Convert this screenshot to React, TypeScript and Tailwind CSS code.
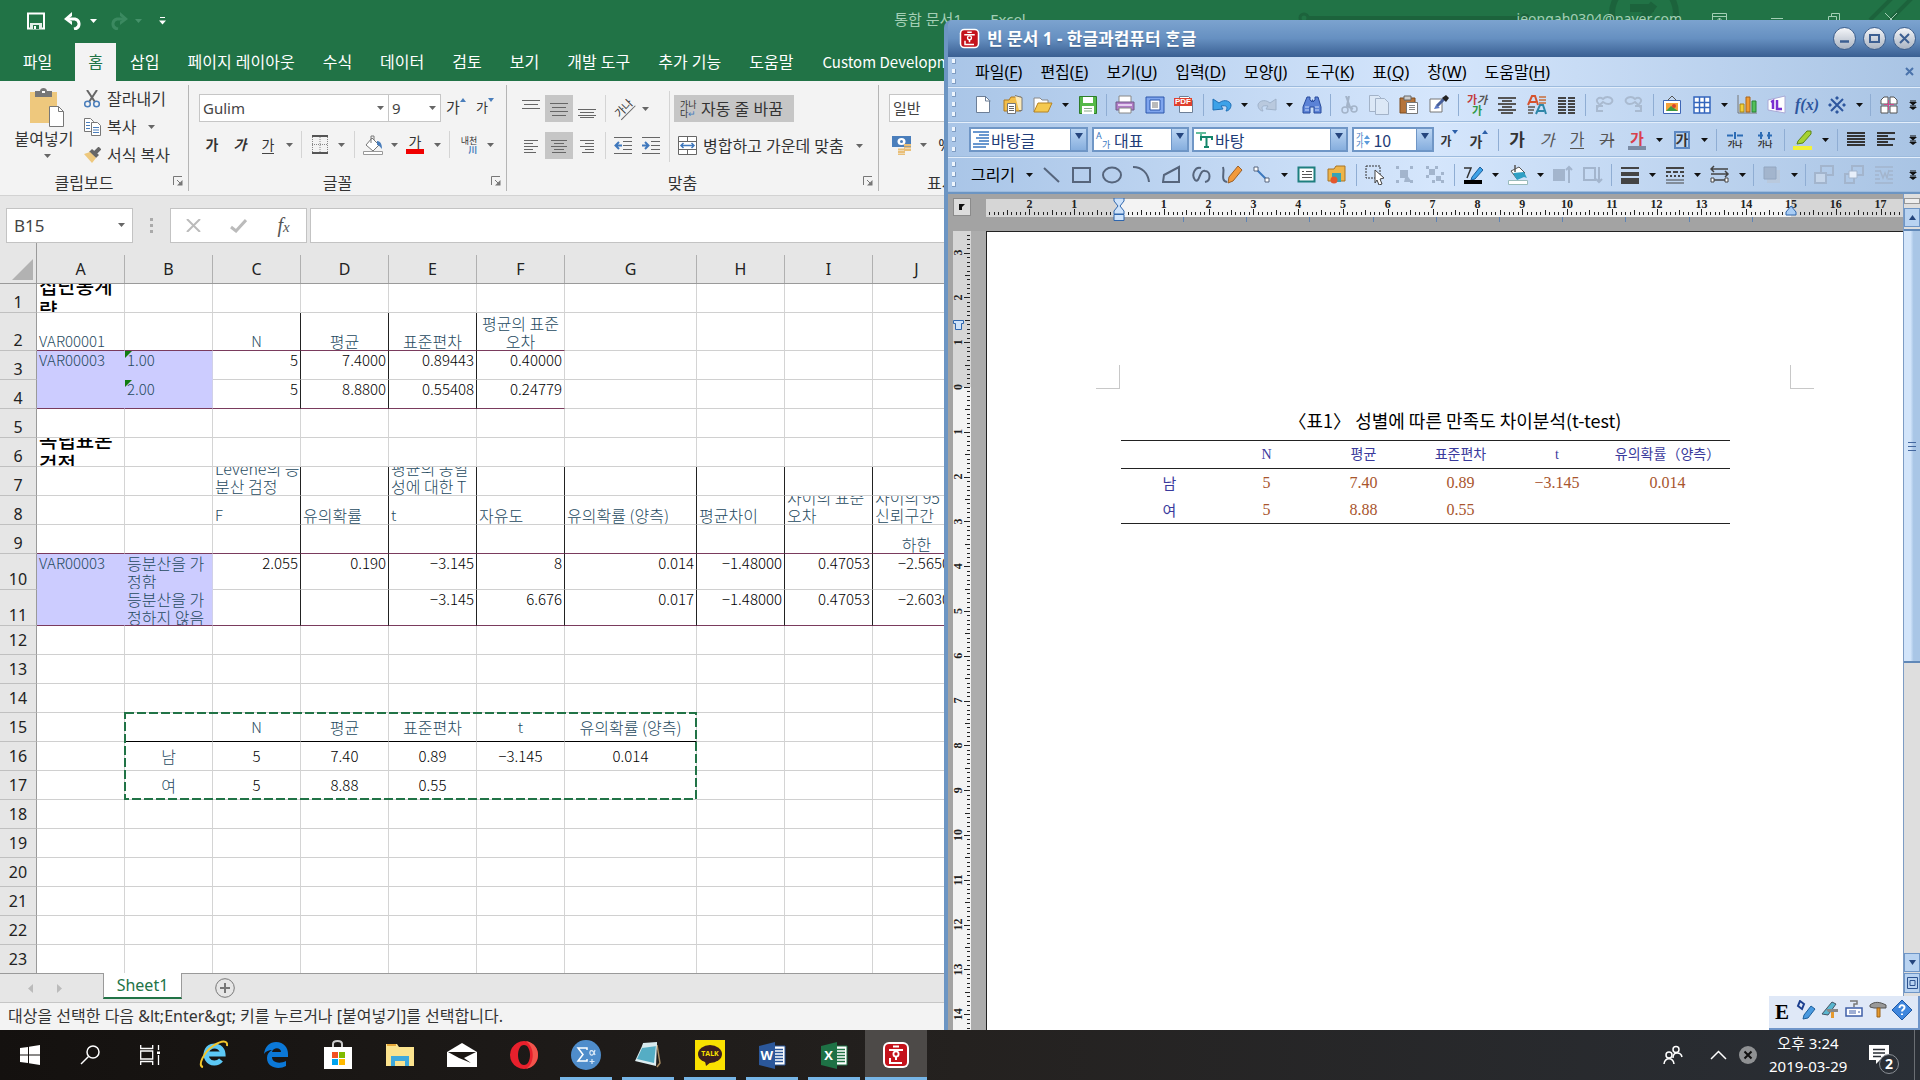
import React from "react";
import type { ReactNode } from "react";

/* ---------- shared bits ---------- */

const UI = "font-['Noto_Sans','Noto_Sans_CJK_KR',sans-serif]";

function Svg({ w = 20, h = w, children, className = "" }: { w?: number; h?: number; children: ReactNode; className?: string }) {
  return (
    <svg width={w} height={h} viewBox={`0 0 ${w} ${h}`} fill="none" className={`shrink-0 ${className}`} aria-hidden="true">
      {children}
    </svg>
  );
}

const Caret = ({ fill = "#666" }: { fill?: string }) => (
  <Svg w={7} h={4}>
    <path d="M0 0h7L3.5 4z" fill={fill} />
  </Svg>
);

const Tip = ({ up = false, fill = "#4a7ebb" }: { up?: boolean; fill?: string }) => (
  <Svg w={6} h={4} className="mb-4">
    <path d={up ? "M0 4h6L3 0z" : "M0 0h6L3 4z"} fill={fill} />
  </Svg>
);

const Lines = ({ rows, stroke = "#666", h = 18, sw = 1 }: { rows: number[][]; stroke?: string; h?: number; sw?: number }) => (
  <Svg w={20} h={h}>
    {rows.map(([x1, x2, y], i) => (
      <path key={i} d={`M${x1} ${y}H${x2}`} stroke={stroke} strokeWidth={sw} />
    ))}
  </Svg>
);

/* ---------- Excel ---------- */

function ExcelTitle() {
  return (
    <header className="relative flex h-[43px] shrink-0 items-start bg-[#217346] text-base text-[#a3cfb5]">
      <svg className="absolute inset-y-0 right-0" width="640" height="43" fill="none" stroke="#1c633c" aria-hidden="true">
        <circle cx="24" cy="18" r="4" strokeWidth="3" />
        <path d="M29 18H240" strokeWidth="4" />
        <circle cx="245" cy="18" r="4" fill="#1c633c" />
        <circle cx="364" cy="14" r="32" strokeWidth="6" />
        <path d="M350 8h24M374 4l-14 18" strokeWidth="8" />
        <path d="M590 20l24-24M606 24l28-28" strokeWidth="4" />
      </svg>
      <div className="relative flex h-[42px] min-w-0 flex-1 items-center">
        <button aria-label="저장" className="ml-[27px] w-[37px]">
          <Svg w={18} h={18}>
            <path d="M1 1.500h16v15h-16z" stroke="#fff" strokeWidth="2" />
            <path d="M3 11h12v6H3z" fill="#e3efe8" />
            <path d="M6 13h6v4H6z" fill="#217346" />
            <path d="M7 14h2v3H7z" fill="#fff" />
          </Svg>
        </button>
        <button aria-label="실행 취소" className="flex w-[45px] items-center gap-[7px]">
          <Svg w={19} h={18}>
            <path d="M3 7h8a5 5 0 0 1 1 9.500l-2 .5" stroke="#fff" strokeWidth="3" />
            <path d="M8 0L0 7l8 6V9.500L4 7l4-3z" fill="#fff" />
          </Svg>
          <Caret fill="#fff" />
        </button>
        <button aria-label="다시 실행" className="flex w-[50px] items-center gap-[7px]">
          <Svg w={19} h={18}>
            <path d="M16 7H8a5 5 0 0 0-1 9.500l2 .5" stroke="#3b8960" strokeWidth="3" />
            <path d="M11 0l8 7-8 6V9.500L15 7l-4-3z" fill="#3b8960" />
          </Svg>
          <Caret fill="#45916a" />
        </button>
        <button aria-label="빠른 실행 도구 모음 사용자 지정">
          <Svg w={7} h={8}>
            <path d="M1 .5h5" stroke="#fff" />
            <path d="M0 3.500h7L3.500 7.500z" fill="#fff" />
          </Svg>
        </button>
      </div>
      <h1 className="relative pt-[9px] text-[15px] leading-5 whitespace-pre">통합 문서1{"   -   "}Excel</h1>
      <div className="relative flex min-w-0 flex-1 items-start justify-end">
        <span className="mr-[22px] pt-[9px] text-[14px] leading-5">jeongah0304@naver.com</span>
        <button aria-label="리본 메뉴 표시 옵션" className="w-[57px] pt-[13px] pl-[8px]">
          <Svg w={15} h={12}>
            <path d="M.5.500h14v11H.5zM.5 3.500h14M7.500 11V5M5 7.500L7.500 5 10 7.500" stroke="#a3cfb5" />
          </Svg>
        </button>
        <button aria-label="최소화" className="w-[57px] pt-[18px] pl-[10px]">
          <Svg w={12} h={2}><path d="M0 .5h12" stroke="#a3cfb5" /></Svg>
        </button>
        <button aria-label="이전 크기로 복원" className="w-[57px] pt-[13px] pl-[10px]">
          <Svg w={12} h={12}><path d="M.5 3.500h8v8h-8zM3.500 3V.5h8v8H9" stroke="#a3cfb5" /></Svg>
        </button>
        <button aria-label="닫기" className="w-[45px] pt-[13px] pl-[10px]">
          <Svg w={12} h={12}><path d="M0 0l12 12M12 0L0 12" stroke="#a3cfb5" /></Svg>
        </button>
      </div>
    </header>
  );
}

const TABS = ["삽입", "페이지 레이아웃", "수식", "데이터", "검토", "보기", "개발 도구", "추가 기능", "도움말"];

function ExcelTabs() {
  return (
    <nav className="flex h-[38px] shrink-0 bg-[#217346] text-base text-white">
      <button className="w-[75px]">파일</button>
      <button className="w-[41px] bg-[#f3f3f3] text-[#217346]">홈</button>
      {TABS.map((t) => (
        <button key={t} className="px-[14px] whitespace-nowrap">{t}</button>
      ))}
      <button className="pl-[15px] font-['Noto_Sans_CJK_KR',sans-serif] text-[15px] whitespace-nowrap">Custom Development</button>
    </nav>
  );
}

const Launcher = () => (
  <button aria-label="추가 옵션" className="absolute right-[5px] bottom-[5px]">
    <Svg w={10} h={10}>
      <path d="M.5 9V.500H9M4 4l4 4" stroke="#777" />
      <path d="M9.500 4v5.500H4z" fill="#777" />
    </Svg>
  </button>
);

function Group({ label, className, children, launcher = true }: { label: string; className: string; children: ReactNode; launcher?: boolean }) {
  return (
    <section aria-label={label} className={`relative my-1 flex h-[106px] shrink-0 flex-col border-r border-[#b5b5b5] ${className}`}>
      {children}
      <div className="mt-auto mb-[-2px] pr-5 text-center text-base leading-5 text-[#333]">{label}</div>
      {launcher && <Launcher />}
    </section>
  );
}

const RBtn = ({ label, w = "w-7", on = false, children }: { label: string; w?: string; on?: boolean; children: ReactNode }) => (
  <button aria-label={label} className={`flex h-[27px] shrink-0 items-center justify-center ${w} ${on ? "bg-[#c6c6c6]" : ""}`}>
    {children}
  </button>
);
const RSep = ({ w = "w-2" }: { w?: string }) => (
  <span className={`flex h-[27px] shrink-0 justify-center ${w}`}>
    <span className="w-px bg-[#d4d4d4]" />
  </span>
);

function Combo({ label, value, className }: { label: string; value: string; className: string }) {
  return (
    <div className={`relative h-7 border border-[#c6c6c6] bg-white ${className}`}>
      <select aria-label={label} className="h-full w-full appearance-none bg-transparent pl-[3px] text-[15px] text-[#444] outline-none">
        <option>{value}</option>
      </select>
      <span className="pointer-events-none absolute top-[11px] right-[4px]"><Caret /></span>
    </div>
  );
}

function Ribbon() {
  return (
    <div className="flex h-[115px] shrink-0 border-b border-[#d2d2d2] bg-[#f3f3f3] text-base text-[#333]">
      <Group label="클립보드" className="w-[189px]">
        <div className="flex">
          <button className="flex w-[84px] flex-col items-center pt-[3px] pl-[4px] leading-[22px]">
            <Svg w={34} h={39} className="ml-[6px]">
              <path d="M0 4h27v31H0z" fill="#eec87d" />
              <path d="M5 3h5c0-4 7-4 7 0h5v6H5z" fill="#777" />
              <path d="M12 3h3v2h-3z" fill="#fff" />
              <path d="M19.500 18.500h9l5 5v15h-14z" fill="#fff" stroke="#777" />
              <path d="M28.500 18.500v5h5" stroke="#777" />
            </Svg>
            <span className="mt-[1px]">붙여넣기</span>
            <span className="mt-[4px] ml-[6px]"><Caret /></span>
          </button>
          <div className="flex flex-col">
            <button className="flex h-7 items-center gap-[7px]">
              <Svg w={16} h={18}>
                <path d="M3 0l8 12M13 0L5 12" stroke="#666" strokeWidth="2" />
                <circle cx="3.500" cy="14" r="2.800" stroke="#4a7ebb" strokeWidth="1.500" />
                <circle cx="12.500" cy="14" r="2.800" stroke="#4a7ebb" strokeWidth="1.500" />
              </Svg>
              잘라내기
            </button>
            <button className="flex h-7 items-center gap-[6px]">
              <Svg w={17} h={18}>
                <path d="M.5.500h6l3 3v10h-9z" fill="#fff" stroke="#777" />
                <path d="M7.500 4.500h6l3 3v10h-9z" fill="#fff" stroke="#777" />
                <path d="M2 4.500h4M2 7.500h4M2 10.500h4M9 9.500h6M9 12h6M9 14.500h6" stroke="#4a7ebb" />
              </Svg>
              복사 <span className="ml-[6px]"><Caret /></span>
            </button>
            <button className="flex h-7 items-center gap-[6px]">
              <Svg w={17} h={16}>
                <path d="M16 1l-5 5" stroke="#666" strokeWidth="4" />
                <path d="M8 2l7 6-3 3-7-6z" fill="#666" />
                <path d="M0 7l6-2 6 6-4 5z" fill="#eec87d" />
              </Svg>
              서식 복사
            </button>
          </div>
        </div>
      </Group>

      <Group label="글꼴" className="w-[318px]">
        <div className="mt-[9px] flex pl-[10px]">
          <Combo label="글꼴" value="Gulim" className="w-[190px]" />
          <Combo label="글꼴 크기" value="9" className="w-[52px] border-l-0" />
          <RBtn label="글꼴 크기 크게" w="w-[30px]"><span className="text-[15px]">가</span><Tip up /></RBtn>
          <RBtn label="글꼴 크기 작게" w="w-[28px]"><span className="text-[13px]">가</span><Tip /></RBtn>
        </div>
        <div className="mt-[9px] flex pl-[9px] text-[14px]">
          <RBtn label="굵게"><b>가</b></RBtn>
          <RBtn label="기울임꼴"><b className="italic">가</b></RBtn>
          <RBtn label="밑줄"><span className="border-b border-[#444] leading-[17px]">가</span></RBtn>
          <RBtn label="밑줄 종류" w="w-[14px]"><Caret /></RBtn>
          <RSep w="w-[10px]" />
          <RBtn label="테두리">
            <Svg w={18} h={19}>
              <path d="M1 1h16M1 18h16" stroke="#555" strokeWidth="2" />
              <path d="M1.500 2v15M9 2v15M16.500 2v15M1 9.500h16" stroke="#888" strokeDasharray="1 1" />
            </Svg>
          </RBtn>
          <RBtn label="테두리 종류" w="w-[15px]"><Caret /></RBtn>
          <RSep w="w-[10px]" />
          <RBtn label="채우기 색">
            <Svg w={20} h={20}>
              <path d="M9 3l7 7-6 6-7-6z" fill="#fff" stroke="#777" />
              <path d="M8 8V1h3v4" stroke="#777" />
              <path d="M14 6c4 0 5 4 5 8-2-2-3-4-5-4z" fill="#4a7ebb" />
              <path d="M.5 16.500h19v3H.5z" fill="#fff" stroke="#999" />
            </Svg>
          </RBtn>
          <RBtn label="채우기 색 선택" w="w-[14px]"><Caret /></RBtn>
          <RBtn label="글꼴 색">
            <span className="border-b-[5px] border-[#f00000] px-[3px] leading-[14px]">가</span>
          </RBtn>
          <RBtn label="글꼴 색 선택" w="w-[16px]"><Caret /></RBtn>
          <RSep w="w-[8px]" />
          <RBtn label="윗주 필드" w="w-8">
            <span className="flex flex-col items-end text-[9px] leading-[9px]">내천<b className="text-[#4a7ebb]">川</b></span>
          </RBtn>
          <RBtn label="윗주 옵션" w="w-[10px]"><Caret /></RBtn>
        </div>
      </Group>

      <Group label="맞춤" className="w-[372px]">
        <div className="flex pl-[10px]">
          <div className="flex flex-col gap-[10px] pt-[10px]">
            <div className="flex">
              <RBtn label="위쪽 맞춤"><Lines rows={[[1, 19, 0.5], [3, 17, 4.5], [1, 19, 8.5]]} /></RBtn>
              <RBtn label="가운데 맞춤" on><Lines rows={[[1, 19, 3.5], [3, 17, 7.5], [1, 19, 11.5], [3, 17, 15.5]]} /></RBtn>
              <RBtn label="아래쪽 맞춤"><Lines rows={[[1, 19, 9.5], [3, 17, 12.5], [1, 19, 15.5], [3, 17, 17.5]]} /></RBtn>
              <RSep />
              <RBtn label="방향" w="w-[30px]">
                <span className="-rotate-45 border-b border-[#666] text-[11px] leading-[12px] whitespace-nowrap">가나</span>
              </RBtn>
              <RBtn label="방향 옵션" w="w-[12px]"><Caret /></RBtn>
            </div>
            <div className="flex">
              <RBtn label="왼쪽 맞춤"><Lines rows={[[3, 17, 3.5], [3, 12, 6.5], [3, 17, 9.5], [3, 12, 12.5], [3, 15, 15.5]]} /></RBtn>
              <RBtn label="가로 가운데 맞춤" on><Lines rows={[[2, 18, 3.5], [5, 15, 6.5], [2, 18, 9.5], [5, 15, 12.5], [3, 17, 15.5]]} /></RBtn>
              <RBtn label="오른쪽 맞춤"><Lines rows={[[3, 17, 3.5], [8, 17, 6.5], [3, 17, 9.5], [8, 17, 12.5], [5, 17, 15.5]]} /></RBtn>
              <RSep />
              <RBtn label="내어쓰기">
                <Svg w={18} h={17}>
                  <path d="M0 .5h18M9 4.500h9M9 8.500h9M9 12.500h9M0 16.500h18" stroke="#666" />
                  <path d="M8 8.500H2M5 5L1.500 8.500 5 12" stroke="#3f78bd" strokeWidth="2" />
                </Svg>
              </RBtn>
              <RBtn label="들여쓰기">
                <Svg w={18} h={17}>
                  <path d="M0 .5h18M9 4.500h9M9 8.500h9M9 12.500h9M0 16.500h18" stroke="#666" />
                  <path d="M0 8.500h6M3 5l3.500 3.500L3 12" stroke="#3f78bd" strokeWidth="2" />
                </Svg>
              </RBtn>
            </div>
          </div>
          <span className="mt-[6px] ml-1 h-[71px] w-px bg-[#d4d4d4]" />
          <div className="flex flex-col items-start gap-[10px] pt-[10px] pl-1">
            <button className="flex h-[27px] w-[120px] items-center bg-[#c6c6c6] pl-[6px] whitespace-nowrap">
              <span className="mr-[3px] w-[18px] text-left text-[9px] leading-[9px]">가나<br />다<span className="text-[#3f78bd]">↵</span></span>
              자동 줄 바꿈
            </button>
            <button className="flex h-[27px] items-center gap-[6px] pl-1 whitespace-nowrap">
              <Svg w={19} h={19}>
                <path d="M.5.500h18v18H.500zM.500 5.500h18M.500 13.500h18M9.500 0v5M9.500 14v5" fill="#fff" stroke="#666" />
                <path d="M3 9.500h13M5.500 7L3 9.500 5.500 12M13.500 7L16 9.500 13.500 12" stroke="#3f78bd" strokeWidth="1.500" />
              </Svg>
              병합하고 가운데 맞춤 <span className="ml-[6px]"><Caret /></span>
            </button>
          </div>
        </div>
      </Group>

      <Group label="표시 형식" className="w-[180px]" launcher={false}>
        <div className="mt-[9px] pl-[10px]">
          <Combo label="표시 형식" value="일반" className="w-[160px]" />
        </div>
        <div className="mt-[9px] flex pl-[9px]">
          <RBtn label="회계 표시 형식">
            <Svg w={20} h={20}>
              <path d="M0 1h19v11H0z" fill="#4a7ebb" />
              <ellipse cx="9.500" cy="6.500" rx="4" ry="3.500" fill="#fff" />
              <circle cx="9.500" cy="6.500" r="1.500" fill="#4a7ebb" />
              <path d="M12 10h7M12 12.500h7M12 15h7M6 14.500h7M6 17h7M6 19.500h7" stroke="#e9bf78" strokeWidth="2" />
            </Svg>
          </RBtn>
          <RBtn label="회계 옵션" w="w-[14px]"><Caret /></RBtn>
          <RBtn label="백분율" w="w-[30px]">%</RBtn>
        </div>
      </Group>
      <div className="flex-1" />
    </div>
  );
}

function FormulaBar() {
  return (
    <div className="flex h-[47px] shrink-0 items-end bg-[#e6e6e6]">
      <div className="relative ml-[6px] h-[35px] w-[127px] border border-[#c3c3c3] bg-white">
        <input aria-label="이름 상자" defaultValue="B15" className="h-full w-full bg-transparent pl-[7px] text-[17px] text-[#444] outline-none" />
        <span className="pointer-events-none absolute top-[14px] right-[7px]"><Caret /></span>
      </div>
      <div className="flex h-[35px] w-[37px] flex-col items-center justify-center gap-[3px]">
        <i className="size-[3px] bg-[#aaa]" /><i className="size-[3px] bg-[#aaa]" /><i className="size-[3px] bg-[#aaa]" />
      </div>
      <div className="flex h-[35px] w-[137px] items-center border border-[#c3c3c3] bg-white">
        <button aria-label="취소" className="flex w-[45px] justify-center"><Svg w={15} h={13}><path d="M1 0l13 13M14 0L1 13" stroke="#bbb" strokeWidth="2" /></Svg></button>
        <button aria-label="입력" className="flex w-[45px] justify-center"><Svg w={17} h={14}><path d="M1 8l5 4L16 1" stroke="#bbb" strokeWidth="3" /></Svg></button>
        <button aria-label="함수 삽입" className="w-[45px] font-['Liberation_Serif',serif] text-[20px] leading-5 text-[#555] italic">f<span className="text-[15px]">x</span></button>
      </div>
      <input aria-label="수식 입력줄" className="ml-[3px] h-[35px] min-w-0 flex-1 border border-[#c3c3c3] bg-white outline-none" />
    </div>
  );
}

type Cell = {
  t?: string[];
  /** tone: d = dark number, h = heading teal, b = bold title */
  k?: "d" | "h" | "b";
  al?: "l" | "c" | "r";
  v?: "t" | "m" | "b";
  flag?: boolean;
};
const n = (s: string): Cell => ({ t: [s.replace("-", "−")], k: "d", al: "r", v: "t" });
const m = (s: string): Cell => ({ t: [s.replace("-", "−")], k: "d", al: "c", v: "m" });
const hc = (...t: string[]): Cell => ({ t, k: "h", al: "c", v: "b" });
const hm = (s: string): Cell => ({ t: [s], k: "h", al: "c", v: "m" });
const hl = (...t: string[]): Cell => ({ t, k: "h", al: "l", v: "b" });
const ht = (...t: string[]): Cell => ({ t, k: "h", al: "l", v: "t" });
const e: Cell = {};

const CELLS: Record<number, Cell[]> = {
  1: [{ t: ["집단통계", "량"], k: "b", al: "l", v: "m" }],
  2: [hl("VAR00001"), e, hc("N"), hc("평균"), hc("표준편차"), hc("평균의 표준", "오차")],
  3: [ht("VAR00003"), { ...ht("1.00"), flag: true }, n("5"), n("7.4000"), n("0.89443"), n("0.40000")],
  4: [e, { ...ht("2.00"), flag: true }, n("5"), n("8.8800"), n("0.55408"), n("0.24779")],
  6: [{ t: ["독립표본", "검정"], k: "b", al: "l", v: "m" }],
  7: [e, e, hl("Levene의 등", "분산 검정"), e, hl("평균의 동일", "성에 대한 T")],
  8: [e, e, hl("F"), hl("유의확률"), hl("t"), hl("자유도"), hl("유의확률 (양측)"), hl("평균차이"), hl("차이의 표준", "오차"), hl("차이의 95", "신뢰구간")],
  9: [e, e, e, e, e, e, e, e, e, hc("하한")],
  10: [ht("VAR00003"), ht("등분산을 가", "정함"), n("2.055"), n("0.190"), n("-3.145"), n("8"), n("0.014"), n("-1.48000"), n("0.47053"), n("-2.56507")],
  11: [e, ht("등분산을 가", "정하지 않음"), e, e, n("-3.145"), n("6.676"), n("0.017"), n("-1.48000"), n("0.47053"), n("-2.60307")],
  15: [e, e, hm("N"), hm("평균"), hm("표준편차"), hm("t"), hm("유의확률 (양측)")],
  16: [e, hm("남"), m("5"), m("7.40"), m("0.89"), m("-3.145"), m("0.014")],
  17: [e, hm("여"), m("5"), m("8.88"), m("0.55")],
};

const COLS = ["A", "B", "C", "D", "E", "F", "G", "H", "I", "J"];

function cellBorder(r: number, c: number) {
  const lav = c < 2 && [3, 4, 10, 11].includes(r);
  const right =
    (r >= 2 && r <= 4 && c >= 2 && c <= 4) || (r >= 7 && r <= 11 && c >= 2)
      ? "border-r-[#222]"
      : lav
        ? c === 0 ? "border-r-[#ccccff]" : "border-r-[#d0d0e8]"
        : "border-r-[#d4d4d4]";
  const bottom =
    ((r === 2 || r === 4) && c <= 5) || r === 9 || r === 11
      ? "border-b-[#7a3b5d]"
      : r === 15 && c >= 1 && c <= 6
        ? "border-b-black"
        : lav
          ? "border-b-[#ccccff]"
          : "border-b-[#d0d0d0]";
  return `${right} ${bottom} ${lav ? "bg-[#ccccff]" : ""}`;
}

function CellView({ cell, h }: { cell: Cell; h: string }) {
  const size = /[가-힣]/.test(cell.t?.join("") ?? "") ? "text-[16px]" : "text-[15px]";
  const tone =
    cell.k === "b"
      ? "text-[20px] leading-6 font-medium text-black"
      : cell.k === "h"
        ? `leading-[18px] text-[#264a60] font-light ${size}`
        : `leading-[18px] text-black font-light ${size}`;
  const al = cell.al === "r" ? "justify-end pr-[2px] text-right" : cell.al === "c" ? "justify-center text-center" : "justify-start pl-[2px]";
  const v = cell.v === "t" ? "items-start" : cell.v === "m" ? "items-center" : "items-end";
  return (
    <div className={`relative flex overflow-hidden whitespace-nowrap ${h} ${tone} ${al} ${v}`}>
      {cell.flag && (
        <svg className="absolute top-0 left-0" width="7" height="7" aria-hidden="true"><path d="M0 0h7L0 7z" fill="#107c10" /></svg>
      )}
      {cell.t && (
        <span>
          {cell.t.map((line, i) => (
            <span key={i} className="block">{line}</span>
          ))}
        </span>
      )}
    </div>
  );
}

function Sheet() {
  return (
    <div className="min-h-0 flex-1 overflow-hidden bg-white">
      <table className="w-[961px] table-fixed border-separate border-spacing-0 font-['Noto_Sans_CJK_KR',sans-serif]">
        <colgroup>
          <col className="w-[37px]" />
          {COLS.map((c) => (
            <col key={c} className={c === "G" ? "w-[132px]" : "w-[88px]"} />
          ))}
        </colgroup>
        <thead className="font-['Noto_Sans',sans-serif] text-[16px] text-[#222]">
          <tr className="h-[41px] bg-[#e6e6e6]">
            <th className="border-r border-b border-[#9a9a9a] p-0" aria-label="모두 선택">
              <div className="flex h-10 items-end justify-end pr-[3px] pb-[3px]">
                <Svg w={21} h={21}><path d="M21 0v21H0z" fill="#b2b2b2" /></Svg>
              </div>
            </th>
            {COLS.map((c) => (
              <th key={c} className="border-b border-[#9a9a9a] p-0 font-normal">
                <div className="flex h-10 items-end">
                  <div className="flex h-7 flex-1 items-center justify-center border-r border-[#b0b0b0] pb-px">{c}</div>
                </div>
              </th>
            ))}
          </tr>
        </thead>
        <tbody>
          {Array.from({ length: 23 }, (_, i) => i + 1).map((r) => {
            const h = r === 2 ? "h-[37px]" : r === 10 || r === 11 ? "h-[35px]" : "h-7";
            return (
              <tr key={r}>
                <th className="border-r border-b border-r-[#9a9a9a] border-b-[#c0c0c0] bg-[#e6e6e6] p-0 font-['Noto_Sans',sans-serif] text-[16px] leading-5 font-normal text-[#222]">
                  <div className={`flex justify-center ${h} ${r >= 12 ? "items-center" : "items-end"}`}>{r}</div>
                </th>
                {COLS.map((c, ci) => (
                  <td key={c} className={`relative border-r border-b p-0 ${cellBorder(r, ci)}`}>
                    <CellView cell={CELLS[r]?.[ci] ?? e} h={h} />
                    {r === 15 && ci === 1 && (
                      <svg className="absolute -top-px -left-px z-10" width="574" height="89" fill="none" aria-hidden="true">
                        <rect x="1" y="1" width="571" height="86" stroke="#217346" strokeWidth="2" strokeDasharray="9 3" />
                      </svg>
                    )}
                  </td>
                ))}
              </tr>
            );
          })}
        </tbody>
      </table>
    </div>
  );
}

function Excel() {
  return (
    <div className={`flex h-full flex-col bg-[#e6e6e6] ${UI}`}>
      <ExcelTitle />
      <ExcelTabs />
      <Ribbon />
      <FormulaBar />
      <Sheet />
      <div className="flex h-[29px] shrink-0 items-start border-t border-[#9a9a9a] bg-[#e6e6e6]">
        <div className="flex h-full w-[103px] items-center gap-6 pl-7">
          <Svg w={5} h={9}><path d="M5 0v9L0 4.500z" fill="#bbb" /></Svg>
          <Svg w={5} h={9}><path d="M0 0v9l5-4.500z" fill="#bbb" /></Svg>
        </div>
        <button className="-mt-px h-[26px] w-[79px] border-x border-b-2 border-x-[#9a9a9a] border-b-[#217346] bg-white text-[16px] leading-5 text-[#217346]">Sheet1</button>
        <button aria-label="새 시트" className="ml-[33px] pt-[4px]">
          <Svg w={20} h={20}>
            <circle cx="10" cy="10" r="9.300" stroke="#777" />
            <path d="M10 5v10M5 10h10" stroke="#777" strokeWidth="2" />
          </Svg>
        </button>
      </div>
      <footer className="h-[28px] shrink-0 border-t border-[#c6c6c6] bg-[#f3f3f3] pl-2 text-[16px] leading-[26px] text-[#333]">
        {"대상을 선택한 다음 &lt;Enter&gt; 키를 누르거나 [붙여넣기]를 선택합니다."}
      </footer>
    </div>
  );
}

/* ---------- Hangul word processor ---------- */

const HanLogo = ({ size }: { size: number }) => (
  <svg width={size} height={size} viewBox="0 0 28 28" fill="none" className="shrink-0" aria-hidden="true">
    <rect x="1" y="1" width="26" height="26" rx="6" fill="#fff" />
    <rect x="3" y="3" width="22" height="22" rx="4" fill="#c4121b" />
    <path d="M11 5.500h6M7 9h14" stroke="#fff" strokeWidth="2" />
    <circle cx="14" cy="13" r="2.600" stroke="#fff" strokeWidth="1.800" />
    <path d="M14 16v3M8 17v5h12" stroke="#fff" strokeWidth="2" />
  </svg>
);

function WinBtn({ label, children }: { label: string; children: ReactNode }) {
  return (
    <button aria-label={label} className="flex size-[23px] items-center justify-center rounded-full border border-[#3d5f8d] bg-linear-to-b from-[#f4f6f9] to-[#a9b3c2]">
      {children}
    </button>
  );
}

const Handle = () => (
  <span className="flex h-full w-5 shrink-0 flex-col items-start justify-center gap-[5px] pl-1">
    {[0, 1, 2].map((i) => (
      <i key={i} className="h-[5px] w-1 border-r border-b border-[#7f9cc2] bg-[#eef5fd]" />
    ))}
  </span>
);

const MENU: [string, string][] = [
  ["파일", "F"], ["편집", "E"], ["보기", "U"], ["입력", "D"], ["모양", "J"], ["도구", "K"], ["표", "Q"], ["창", "W"], ["도움말", "H"],
];

const T = ({ label, children }: { label: string; children: ReactNode }) => (
  <button aria-label={label} className="flex h-[30px] w-[30px] shrink-0 items-center justify-center">{children}</button>
);
const D = () => (
  <button aria-label="펼침" className="flex h-[30px] w-[15px] shrink-0 items-center justify-center"><Caret fill="#111" /></button>
);
const S = ({ w = "w-2" }: { w?: string }) => (
  <span className={`flex h-[22px] shrink-0 justify-center ${w}`}><span className="w-px bg-[#8fadd3]" /></span>
);
const More = () => (
  <button aria-label="더 보기" className="mr-[3px] ml-auto">
    <Svg w={8} h={10}><path d="M1 1h6M1 6h6" stroke="#111" /><path d="M0 2h8L4 5.500zM0 7h8l-4 3z" fill="#111" /></Svg>
  </button>
);

const BAR = "flex h-[35px] shrink-0 items-center border-t border-[#e3eefb] border-b border-b-[#9dbbdd]";

const Page = ({ x = 0, y = 0, c = "#6d7f97", f = "#fff" }: { x?: number; y?: number; c?: string; f?: string }) => (
  <path d={`M${x + 0.5} ${y + 0.5}h9l4 4v12h-13z`} fill={f} stroke={c} />
);

function StandardBar() {
  return (
    <div className={BAR}>
      <Handle />
      <T label="새 문서"><Svg w={18}><Page x={2} /><path d="M11.500 0v5h5" stroke="#6d7f97" /></Svg></T>
      <T label="서식 파일">
        <Svg w={20}><path d="M1 5h5l2-3h10v14H1z" fill="#f2bf4c" stroke="#b07a20" /><path d="M12 .5l7 2v13h-3" fill="#fce9b8" stroke="#777" /><path d="M4.500 8.500h8v10h-8z" fill="#fff" stroke="#777" /><path d="M6 11.500h5M6 13.500h5M6 15.500h5" stroke="#666" /></Svg>
      </T>
      <T label="불러오기"><Svg w={20}><path d="M1 17V3h6l2 2h6v4" fill="#fff" stroke="#888" /><path d="M1 17L5 8h14l-4 9z" fill="#f5c94f" stroke="#b58324" /></Svg></T>
      <D />
      <T label="저장하기"><Svg w={18}><path d="M.5.500h17v17H.5z" fill="#55b948" stroke="#2f7d2a" /><path d="M4 1h10v6H4zM3 10h12v8H3z" fill="#fff" /><path d="M5 12.500h8M5 15h8" stroke="#8a8" /></Svg></T>
      <S w="w-[7px]" />
      <T label="인쇄"><Svg w={20}><path d="M4 1h12v7H4z" fill="#fff" stroke="#888" /><path d="M1 7h18v8H1z" fill="#b07cc6" stroke="#6f5a86" /><path d="M4 13h12v5H4z" fill="#fff" stroke="#888" /><path d="M3 10h14" stroke="#e4cff0" strokeWidth="2" /></Svg></T>
      <T label="미리 보기"><Svg w={20}><path d="M1 2h18v16H1z" fill="#7fa5ee" stroke="#2c57ab" /><path d="M5 5h10v10H5z" fill="#fff" stroke="#2c57ab" /><path d="M7 8h6M7 10h6M7 12h6" stroke="#777" /></Svg></T>
      <T label="PDF로 저장하기">
        <span className="relative flex"><Svg w={20}><Page x={4} y={1} /></Svg><span className="absolute top-[3px] -left-px bg-[#e0402f] px-px font-['Liberation_Sans',sans-serif] text-[8px] leading-[8px] font-bold text-white">PDF</span></span>
      </T>
      <S w="w-[7px]" />
      <T label="되돌리기"><Svg w={20}><path d="M7 8c6-5 12-1 12 2 0 4-3 6-5 6 2-4 1-6-5-5l2 3-10 1L1 4z" fill="#3da2e8" stroke="#1f6fb5" /></Svg></T>
      <D />
      <T label="다시 실행"><Svg w={20}><path d="M13 8C7 3 1 7 1 10c0 4 3 6 5 6-2-4-1-6 5-5l-2 3 10 1V4z" fill="#b9c9de" stroke="#9fb2ca" /></Svg></T>
      <D />
      <T label="찾기"><Svg w={20}><path d="M5 2h3v3l2 2V5h1v2l2-2V2h3l3 10v6h-7v-6H8v6H1v-6z" fill="#5b82d6" stroke="#284a9c" /><path d="M3 12h4M13 12h4M3 15h4M13 15h4" stroke="#c9dafa" /></Svg></T>
      <S w="w-[7px]" />
      <T label="오려 두기"><Svg w={18}><path d="M6 0l4 11M9 0L7 10l6 3" stroke="#a3b3c8" strokeWidth="2" /><circle cx="5" cy="14" r="3" stroke="#a3b3c8" strokeWidth="1.500" /><circle cx="14" cy="13" r="3" stroke="#a3b3c8" strokeWidth="1.500" /></Svg></T>
      <T label="복사하기"><Svg w={20}><Page x={0} c="#a3b3c8" f="#dce8f6" /><Page x={6} y={3} c="#a3b3c8" f="#dce8f6" /></Svg></T>
      <T label="붙이기"><Svg w={20}><path d="M1 3h15v15H1z" fill="#b5743a" stroke="#7c4a1d" /><path d="M5 1h7v4H5z" fill="#ccc" stroke="#666" /><path d="M7.500 7.500h11v11h-11z" fill="#fff" stroke="#777" /><path d="M10 10.500h6M10 12.500h6M10 14.500h6" stroke="#888" /></Svg></T>
      <T label="모양 복사"><Svg w={20}><path d="M1 4h12v13H1z" fill="#fff" stroke="#777" /><path d="M5 14l2-4 4 3z" fill="#5a78c8" /><path d="M8 11l7-7" stroke="#48609c" strokeWidth="3" /><path d="M13 3l4-3 3 3-3 4z" fill="#222" /></Svg></T>
      <S />
      <T label="글자 모양"><span className="relative text-[11px] leading-[11px] font-bold"><span className="text-[#c33d3d]">가</span><span className="text-[#555] italic">가</span><br /><span className="text-[#2f9a44]">가</span></span></T>
      <T label="문단 모양"><Lines h={20} sw={2} stroke="#555" rows={[[1, 19, 3], [5, 15, 6], [1, 19, 9], [5, 15, 12], [1, 19, 15], [4, 16, 18]]} /></T>
      <T label="스타일"><Svg w={20}><path d="M1 10L5 1h3l3 9M3 7h6" stroke="#d5522d" strokeWidth="2" /><path d="M12 2h7M12 5h7M12 8h7" stroke="#c98a6a" strokeWidth="2" /><path d="M9 19l4-9h3l3 9M11 16h6" stroke="#2d86a8" strokeWidth="2" /><path d="M1 12h7M1 15h6M1 18h5" stroke="#777" strokeWidth="2" /></Svg></T>
      <T label="다단"><Svg w={20}><path d="M1 3h8M1 6h8M1 9h8M1 12h8M1 15h8M1 18h8M11 3h7M11 6h7M11 9h7M11 12h7M11 15h7M11 18h7" stroke="#444" strokeWidth="2" /></Svg></T>
      <S w="w-[7px]" />
      <T label="이전 검색"><Svg w={20}><path d="M5 9c-5-4 0-8 4-5 4-4 11-1 9 3-2 3-6 2-9 0-2 2-4 3-6 6M9 11H3v5h6" stroke="#a9bad0" strokeWidth="2" /></Svg></T>
      <T label="다음 검색"><Svg w={20}><path d="M15 9c5-4 0-8-4-5C7 0 0 3 2 7c2 3 6 2 9 0 2 2 4 3 6 6M11 11h6v5h-6" stroke="#a9bad0" strokeWidth="2" /></Svg></T>
      <S />
      <T label="그림"><Svg w={20}><path d="M6 5l4-4 4 4" stroke="#555" /><path d="M1.500 5.500h17v13h-17z" fill="#fff" stroke="#3f66b5" /><path d="M4 8h12v8H4z" fill="#f6a23a" /><path d="M4 16l5-5 7 5z" fill="#3d9c42" /><circle cx="12" cy="11" r="2" fill="#d8442c" /></Svg></T>
      <T label="표"><Svg w={18}><path d="M1 1h16v16H1zM1 6.500h16M1 11.500h16M6.500 1v16M11.500 1v16" fill="#fff" stroke="#3466bd" strokeWidth="1.500" /></Svg></T>
      <D />
      <T label="차트"><Svg w={20}><path d="M1 0v18h19" stroke="#777" /><path d="M3 9h4v8H3z" fill="#f2d13a" stroke="#a88516" /><path d="M9 2h4v15H9z" fill="#f19b32" stroke="#a8651a" /><path d="M15 6h4v11h-4z" fill="#52c05a" stroke="#2b8333" /></Svg></T>
      <T label="글맵시"><Svg w={20}><path d="M1 5l17-4v17L1 15z" fill="#fff" stroke="#a9a9d6" /><path d="M4 7l2-1v8M10 5v9h5" stroke="#7a2fd0" strokeWidth="2.500" /></Svg></T>
      <T label="수식"><span className="font-['Liberation_Serif',serif] text-[16px] font-bold text-[#2d569e] italic">f(x)</span></T>
      <T label="문자표"><Svg w={20}><path d="M4 4l12 12M16 4L4 16" stroke="#2d569e" strokeWidth="2" /><path d="M10 1l2 2-2 2-2-2zM10 15l2 2-2 2-2-2zM3 8l2 2-2 2-2-2zM17 8l2 2-2 2-2-2z" fill="#2d569e" /></Svg></T>
      <D />
      <S w="w-[7px]" />
      <T label="쪽 나누기"><Svg w={18}><path d="M1 4l3-3h4v7H1zM10 1h4l3 3v4h-7zM1 10h7v7H1zM10 10h7v7h-7z" fill="#fff" stroke="#555" /><path d="M8.500 4v10M4 8.500h10" stroke="#d14a8b" /></Svg></T>
      <More />
    </div>
  );
}

function HCombo({ label, value, className, children }: { label: string; value: string; className: string; children: ReactNode }) {
  return (
    <div className={`relative flex h-[25px] shrink-0 items-center border-2 border-[#6f96c6] bg-white pl-[2px] ${className}`}>
      {children}
      <select aria-label={label} className="h-full min-w-0 flex-1 appearance-none bg-transparent pl-[2px] font-['Noto_Sans_CJK_KR',sans-serif] text-[16px] leading-5 text-[#1e3c78] outline-none">
        <option>{value}</option>
      </select>
      <span className="pointer-events-none absolute inset-y-0 right-0 flex w-4 justify-center border-l border-[#6f96c6] bg-linear-to-b from-[#bcd6f3] to-[#86aede] pt-[4px]">
        <Svg w={8} h={6}><path d="M0 0h8L4 6z" fill="#25457d" /></Svg>
      </span>
    </div>
  );
}

function FormatBar() {
  return (
    <div className={`${BAR} text-[#333]`}>
      <Handle />
      <HCombo label="스타일" value="바탕글" className="ml-px w-[119px]">
        <Svg w={16} h={17}><path d="M0 1h16M6 4h10M3 7h13M6 10h10M0 13h16M0 16h13" stroke="#3a77c0" strokeWidth="1.500" /></Svg>
      </HCombo>
      <HCombo label="언어" value="대표" className="ml-1 w-[97px]">
        <span className="w-4 text-[9px] leading-[9px] text-[#3a77c0]">A<br /><span className="pl-[6px]">가</span></span>
      </HCombo>
      <HCombo label="글꼴" value="바탕" className="ml-[3px] w-[156px]">
        <Svg w={17} h={17}><path d="M0 2h10M5 2v8" stroke="#63bd9c" strokeWidth="2" /><path d="M5 6h11M10.500 6v10M5 5v4M16 5v4M8 16h5" stroke="#14866a" strokeWidth="2" /></Svg>
      </HCombo>
      <HCombo label="글자 크기" value="10" className="ml-1 w-[82px]">
        <span className="flex items-center text-[8px] leading-[8px] text-[#3a77c0]"><span>가<br />가</span>
          <Svg w={8} h={12}><path d="M1 5l3-4 3 4zM1 7l3 4 3-4z" fill="#5a9bdc" /></Svg></span>
      </HCombo>
      <T label="글자 작게"><span className="pt-1 text-[12px] font-bold">가</span><Tip fill="#2c5fa8" /></T>
      <T label="글자 크게"><span className="pt-1 text-[14px] font-bold">가</span><Tip up fill="#2c5fa8" /></T>
      <S />
      <T label="진하게"><span className="text-[17px] font-bold">가</span></T>
      <T label="기울임"><span className="text-[16px] text-[#555] italic">가</span></T>
      <T label="밑줄"><span className="border-b border-[#555] text-[16px] leading-[18px] text-[#555]">가</span></T>
      <T label="취소선"><span className="text-[16px] text-[#555] line-through">가</span></T>
      <T label="글자 색"><span className="border-b-4 border-[#7b8ca5] px-[2px] text-[15px] leading-[16px] font-bold text-[#d8404d]">가</span></T>
      <D />
      <T label="글자 테두리"><span className="border-2 border-[#5d88c2] text-[14px] leading-[14px] font-bold">가</span></T>
      <D />
      <S />
      <T label="자간 좁게"><span className="flex flex-col items-center text-[8px] leading-[9px] font-bold"><Svg w={18} h={7}><path d="M1 3.500h6M11 3.500h6M9 0v7" stroke="#2c6cb5" strokeWidth="2" /></Svg>가나</span></T>
      <T label="자간 넓게"><span className="flex flex-col items-center text-[8px] leading-[9px] font-bold"><Svg w={18} h={7}><path d="M2 3.500h5M11 3.500h5M5 0v7M13 0v7" stroke="#2c6cb5" strokeWidth="2" /></Svg>가나</span></T>
      <S />
      <T label="형광펜"><Svg w={20}><path d="M5 11l9-10h4v3l-8 9-6 1z" fill="#a6d332" stroke="#5c8518" /><path d="M0 16h19v4H0z" fill="#f2f23a" /></Svg></T>
      <D />
      <S />
      <T label="양쪽 정렬"><Lines h={18} sw={2} stroke="#333" rows={[[1, 19, 2], [1, 19, 5], [1, 19, 8], [1, 19, 11], [1, 19, 14]]} /></T>
      <T label="왼쪽 정렬"><Lines h={18} sw={2} stroke="#333" rows={[[1, 19, 2], [1, 12, 5], [1, 19, 8], [1, 12, 11], [1, 17, 14]]} /></T>
      <More />
    </div>
  );
}

function DrawBar() {
  const s = "#56657c";
  const g = "#a3b5cd";
  return (
    <div className={BAR}>
      <Handle />
      <button className="w-[54px] pr-1 text-[16px] whitespace-nowrap">그리기</button>
      <D />
      <T label="직선"><Svg w={18}><path d="M1 2l15 14" stroke={s} strokeWidth="2" /></Svg></T>
      <T label="직사각형"><Svg w={20}><path d="M1 3h17v14H1z" stroke={s} strokeWidth="2" /></Svg></T>
      <T label="타원"><Svg w={20}><ellipse cx="10" cy="10" rx="9" ry="7.500" stroke={s} strokeWidth="2" /></Svg></T>
      <T label="호"><Svg w={20}><path d="M1 2c9 0 15 6 16 15" stroke={s} strokeWidth="2" /></Svg></T>
      <T label="다각형"><Svg w={20}><path d="M2 10l15-8v15H1z" stroke={s} strokeWidth="2" /></Svg></T>
      <T label="곡선"><Svg w={20}><path d="M9 3C3 1-1 10 3 15c5 4 4-11 10-9 6 0 6 10 0 11" stroke={s} strokeWidth="2" /></Svg></T>
      <T label="자유선"><Svg w={22} h={20}><path d="M2 2c2 5-3 14 4 15" stroke={s} strokeWidth="2" /><path d="M8 12L17 1l4 4-9 11-5 2z" fill="#f29a3c" stroke="#99602a" /></Svg></T>
      <T label="연결선"><Svg w={18}><path d="M3 3l11 11" stroke="#3c78bd" strokeWidth="2" /><path d="M1 1h4v4H1zM12 12h4v4h-4z" fill="#fff" stroke={s} /></Svg></T>
      <D />
      <T label="글상자"><Svg w={20}><path d="M1.500 2.500h16v14h-16z" fill="#fff" stroke="#1e7f7f" strokeWidth="2" /><path d="M5 6.500h2M9 6.500h6M5 9.500h10M5 12.500h10" stroke="#555" /></Svg></T>
      <T label="그리기마당"><Svg w={20}><path d="M1 4h6l2-3h9v15H1z" fill="#eeb54a" stroke="#a87426" /><path d="M5 8h9v9H5z" fill="#36a3b8" /><circle cx="7" cy="15" r="3.500" fill="#e4572e" /></Svg></T>
      <S />
      <T label="개체 선택"><Svg w={20}><path d="M1 1h14v12H1z" stroke="#333" strokeDasharray="2 1" /><path d="M10 5l9 8-4 1 2 5-3 1-2-5-2 3z" fill="#fff" stroke="#444" /></Svg></T>
      <T label="개체 묶기"><Svg w={18}><path d="M4 4h8v8H4z" fill={g} /><path d="M0 0h3v3H0zM14 0h3v3h-3zM0 14h3v3H0zM14 14h3v3h-3zM10 8l6 8H8z" fill={g} /></Svg></T>
      <T label="개체 풀기"><Svg w={18}><path d="M3 3h6v6H3zM10 10h5v5h-5z" fill={g} /><path d="M0 0h3v3H0zM9 0h3v3H9zM0 9h3v3H0zM6 14h3v3H6zM15 6h3v3h-3zM15 14h3v3h-3z" fill={g} /></Svg></T>
      <S />
      <T label="선 색"><Svg w={20}><path d="M1 3h7L4 13" stroke="#333" strokeWidth="1.500" /><path d="M9 12l8-10 3 3-8 9-4 1z" fill="#3da2e8" stroke="#1d5f9b" /><path d="M1 15h18v4H1z" fill="#000" /></Svg></T>
      <D />
      <T label="채우기 색"><Svg w={20}><path d="M3 6l8-4 6 6-8 6z" fill="#fff" stroke="#555" /><path d="M5 8l11-1 3 6-3-1-7 3z" fill="#2f9fc4" /><path d="M7 0v7" stroke="#555" strokeWidth="1.500" /><path d="M.5 15.500h19v4H.5z" fill="#fff" stroke="#9bb" /></Svg></T>
      <D />
      <T label="앞으로"><Svg w={20}><path d="M0 4h12v12H0z" fill={g} /><path d="M16 18V3M13 5l3-3 3 3" stroke={g} strokeWidth="2" /></Svg></T>
      <T label="뒤로"><Svg w={20}><path d="M1 3h11v12H1z" stroke={g} strokeWidth="2" /><path d="M16 2v15M13 14l3 3 3-3" stroke={g} strokeWidth="2" /></Svg></T>
      <S w="w-[7px]" />
      <T label="선 굵기"><Svg w={18}><path d="M0 2h18" stroke="#444" strokeWidth="2" /><path d="M0 8h18" stroke="#444" strokeWidth="4" /><path d="M0 15h18" stroke="#444" strokeWidth="6" /></Svg></T>
      <D />
      <T label="선 종류"><Svg w={18}><path d="M0 2h18" stroke="#444" strokeWidth="2" /><path d="M0 6h18" stroke="#444" strokeWidth="2" strokeDasharray="5 2" /><path d="M0 10h18" stroke="#444" strokeWidth="2" strokeDasharray="2 2" /><path d="M0 14h18M0 17h18" stroke="#444" /></Svg></T>
      <D />
      <T label="화살표 모양"><Svg w={20}><path d="M1 4h17M4 1L1 4l3 3M1 9h17M15 6l3 3-3 3M3 15h13" stroke="#444" strokeWidth="1.500" /><path d="M1 13h3v4H1zM15 13h3v4h-3z" fill="#fff" stroke="#444" /></Svg></T>
      <D />
      <S w="w-[7px]" />
      <T label="그림자"><Svg w={18}><path d="M4 4h13v13H4z" fill="#b9c9dd" /><path d="M1 1h12v12H1z" fill={g} stroke="#93a6c0" /></Svg></T>
      <D />
      <S w="w-[7px]" />
      <T label="맨 앞으로"><Svg w={20}><path d="M7 1h12v9H7z" stroke={g} strokeWidth="2" /><path d="M1 8h11v10H1z" fill="#c6d6ea" stroke={g} strokeWidth="2" /></Svg></T>
      <T label="맨 뒤로"><Svg w={20}><path d="M8 1h11v9H8zM1 9h9v9H1z" stroke={g} strokeWidth="2" /><path d="M5 6h8v7H5z" fill="#e7effa" stroke={g} /></Svg></T>
      <T label="본문 배치"><Svg w={20}><path d="M1 2h18M1 6h5M14 6h5M1 10h4M15 10h4M1 14h5M14 14h5M1 18h18M6 5l3 8 2-5 2 5 2-8" stroke={g} strokeWidth="1.500" /></Svg></T>
      <More />
    </div>
  );
}

const CM = 44.8;

function HRuler() {
  const zero = 133;
  const ticks = Array.from({ length: 205 }, (_, i) => i - 29);
  return (
    <svg className="h-[31px] w-full" aria-hidden="true">
      <rect width="100%" height="18" y="1" fill="#d6d6d6" />
      <rect x={zero} width={15 * CM} height="18" y="1" fill="#f3f3f3" />
      {ticks.map((i) => {
        const x = Math.round(zero + (i * CM) / 10);
        const len = i % 10 === 0 ? 6 : i % 5 === 0 ? 5 : 3;
        return <rect key={i} x={x} y={17 - len} width="1" height={len} fill="#222" />;
      })}
      {Array.from({ length: 20 }, (_, i) => i - 2).map((i) =>
        i === 0 ? null : (
          <text key={i} x={zero + i * CM} y="10" textAnchor="middle" className="font-['Liberation_Serif',serif] text-[12px] font-bold" fill="#222">
            {Math.abs(i)}
          </text>
        ),
      )}
      {Array.from({ length: 10 }, (_, i) => (
        <rect key={i} x={Math.round(197 + i * 63.2)} y="19" width="1" height="5" fill="#5f84b5" />
      ))}
      <path d={`M${zero - 5} 0h10v3l-4 5 4 5v3h-10v-3l4-5-4-5z`} fill="#cfe3fa" stroke="#2f66ad" />
      <path d={`M${zero - 5} 16.500h10v6h-10z`} fill="#cfe3fa" stroke="#2f66ad" />
      <path d="M805 8l5 6v3h-10v-3z" fill="#a9cdf5" stroke="#2f66ad" />
    </svg>
  );
}

function VRuler() {
  const zero = 156;
  const ticks = Array.from({ length: 178 }, (_, i) => i - 34);
  return (
    <svg className="h-full w-[18px]" aria-hidden="true">
      <rect width="18" height={zero} fill="#d6d6d6" />
      <rect width="18" height="100%" y={zero} fill="#f3f3f3" />
      {ticks.map((i) => {
        const y = Math.round(zero + (i * CM) / 10);
        const len = i % 10 === 0 ? 6 : i % 5 === 0 ? 5 : 3;
        return <rect key={i} x={17 - len} y={y} width={len} height="1" fill="#222" />;
      })}
      {Array.from({ length: 18 }, (_, i) => i - 3).map((i) => (
        <text key={i} transform={`translate(9 ${zero + i * CM}) rotate(-90)`} textAnchor="middle" className="font-['Liberation_Serif',serif] text-[12px] font-bold" fill="#222">
          {Math.abs(i)}
        </text>
      ))}
      <path d="M.5 89.500h10v3h-2v6h-6v-6h-2z" fill="#cfe3fa" stroke="#2f66ad" />
    </svg>
  );
}

const DOC_ROWS = [
  ["남", "5", "7.40", "0.89", "-3.145", "0.014"],
  ["여", "5", "8.88", "0.55", "", ""],
];

function DocPage() {
  return (
    <main className="min-w-0 flex-1 overflow-hidden border-t border-l border-[#222] bg-white pt-[133px] pl-[109px]">
      <div className="flex w-[718px] justify-between">
        <span className="h-6 w-[24px] border-r border-b border-[#c8c8c8]" />
        <span className="h-6 w-[24px] border-b border-l border-[#c8c8c8]" />
      </div>
      <article className="ml-6 w-[670px] font-['Noto_Sans_CJK_KR',sans-serif]">
        <h2 className="mt-[19px] text-center text-[18px] leading-6 text-black">〈표1〉 성별에 따른 만족도 차이분석(t-test)</h2>
        <table className="mt-[8px] ml-px table-fixed border-collapse border-y border-[#222] text-center text-[15px] leading-[27px]">
          <colgroup>
            <col className="w-[97px]" /><col className="w-[97px]" /><col className="w-[97px]" />
            <col className="w-[97px]" /><col className="w-[96px]" /><col className="w-[125px]" />
          </colgroup>
          <thead>
            <tr className="border-b border-[#222] text-[#3a3a9c]">
              {["", "N", "평균", "표준편차", "t", "유의확률（양측）"].map((h) => (
                <th key={h} className="p-0 font-['Liberation_Serif','Noto_Sans_CJK_KR',serif] text-[14px] font-normal whitespace-nowrap">{h}</th>
              ))}
            </tr>
          </thead>
          <tbody className="text-[#a8552d]">
            {DOC_ROWS.map((r) => (
              <tr key={r[0]} className="h-[27px]">
                {r.map((c, i) =>
                  i === 0 ? (
                    <th key={i} className="p-0 font-normal text-[#3a3a9c]">{c}</th>
                  ) : (
                    <td key={i} className="p-0 font-['Liberation_Serif',serif] text-[16px]">{c.replace("-", "−")}</td>
                  ),
                )}
              </tr>
            ))}
          </tbody>
        </table>
      </article>
    </main>
  );
}

function ImeBar() {
  return (
    <div className="absolute right-0 bottom-0 flex h-[34px] w-[151px] items-center border-r-2 border-b-2 border-[#6f95c9] bg-[#dfe8f7] pl-px">
      <button className="w-6 font-['Liberation_Serif',serif] text-[21px] leading-6 font-bold text-black">E</button>
      {[
        <><path d="M4 1l4 3-2 5-4-3z" stroke="#1c3f8f" strokeWidth="2" /><path d="M8 15L15 6l4 3-7 9-5 1z" fill="#4a9ae0" stroke="#1d5f9b" /></>,
        <><path d="M2 14L12 2l4 2-8 11z" fill="#59b6cf" stroke="#456" /><path d="M6 9h12v3H8z" fill="#888" /><path d="M11 12h3v6h-3z" fill="#e69a2e" /></>,
        <><path d="M10 7V4h3V1H6" stroke="#777" strokeWidth="1.500" /><path d="M2 8h16v8H2z" fill="#fff" stroke="#3f5fa8" strokeWidth="1.500" /><path d="M5 11h7M5 13h7M14 12h2" stroke="#3f5fa8" /></>,
        <><path d="M2 5c5-4 10-3 16 0v3H6L2 7z" fill="#999" stroke="#555" /><path d="M9 8h3v9H9z" fill="#e69a2e" stroke="#9c621a" /></>,
        <><path d="M10 0l10 10-10 10L0 10z" fill="#3f86dd" stroke="#1d57a5" /><path d="M7.500 8c0-4 5-3 5-.5 0 2-2.500 2-2.500 4M10 13.500v1.500" stroke="#fff" strokeWidth="2" /></>,
      ].map((g, i) => (
        <button key={i} aria-label="입력기 도구" className="flex w-6 justify-center pb-1"><Svg w={20}>{g}</Svg></button>
      ))}
    </div>
  );
}

function Hangul() {
  return (
    <section
      aria-label="빈 문서 1"
      className={`absolute top-5 right-0 bottom-0 left-[944px] flex flex-col overflow-hidden rounded-tl-lg border-l-4 border-[#6c95c3] bg-[#a3a3a3] text-black ${UI}`}
    >
      <header className="-ml-1 flex h-[37px] shrink-0 items-center bg-linear-to-b from-[#7ca3cf] via-[#6690c1] to-[#3a5f92] pr-[4px] pl-[15px]">
        <HanLogo size={21} />
        <h2 className="ml-[7px] text-[17px] font-bold text-white text-shadow-sm">빈 문서 1 - 한글과컴퓨터 ᄒᆞᆫ글</h2>
        <div className="ml-auto flex gap-[7px]">
          <WinBtn label="최소화"><Svg w={11} h={11}><path d="M1 8.500h9" stroke="#3c5f92" strokeWidth="2.500" /></Svg></WinBtn>
          <WinBtn label="최대화"><Svg w={11} h={11}><path d="M1 2h9v7H1z" stroke="#3c5f92" strokeWidth="2" /></Svg></WinBtn>
          <WinBtn label="닫기"><Svg w={11} h={11}><path d="M1 1l9 9M10 1l-9 9" stroke="#3c5f92" strokeWidth="2" /></Svg></WinBtn>
        </div>
      </header>
      <div className="flex shrink-0 flex-col border-b-2 border-[#6c95c3] bg-linear-to-r from-[#a9c5e7] via-[#d5e6fc] to-[#a9c4e4]">
        <nav className="flex h-[30px] items-center border-b border-[#9dbbdd] text-[16px]">
          <Handle />
          <div className="flex pl-[7px]">
            {MENU.map(([t, k]) => (
              <button key={t} className="mr-[18px] whitespace-nowrap">
                {t}(<u className="underline-offset-2">{k}</u>)
              </button>
            ))}
          </div>
          <button aria-label="문서 닫기" className="mr-[6px] ml-auto"><Svg w={9} h={9}><path d="M1 1l7 7M8 1L1 8" stroke="#4a73ab" strokeWidth="2" /></Svg></button>
        </nav>
        <StandardBar />
        <FormatBar />
        <DrawBar />
      </div>
      <div className="flex min-h-0 flex-1">
        <div className="flex min-w-0 flex-1 flex-col">
          <div className="flex h-[37px] shrink-0 items-start pt-1 pl-[5px]">
            <button aria-label="탭 종류" className="mr-[15px] flex size-[18px] items-center justify-center border border-[#8b8b8b] bg-[#dcdcdc]">
              <Svg w={6} h={6}><path d="M0 0h6L3 3v3H0z" fill="#111" /></Svg>
            </button>
            <div className="min-w-0 flex-1"><HRuler /></div>
          </div>
          <div className="flex min-h-0 flex-1 pl-[5px]">
            <VRuler />
            <span className="w-[15px] shrink-0 bg-[#acacac]" />
            <DocPage />
          </div>
        </div>
        <div className="flex w-[17px] shrink-0 flex-col border-l border-[#7d9cc4] bg-[#dedede]">
          <span className="my-1 h-[6px] shrink-0 border border-[#999] bg-[#eee]" />
          <button aria-label="위로" className="flex h-[19px] shrink-0 items-center justify-center border border-[#6f96c6] bg-[#b9d3f1]"><Svg w={7} h={5}><path d="M3.500 0L7 5H0z" fill="#25457d" /></Svg></button>
          <div className="mt-[2px] flex min-h-0 flex-1 flex-col">
            <span className="flex h-3/5 flex-col items-center justify-center gap-[3px] border-y-2 border-[#6088b8] bg-linear-to-r from-[#d3e5fa] from-40% to-[#a9c6e6] to-60%">
              <i className="h-px w-2 bg-[#4468a0]" /><i className="h-px w-2 bg-[#4468a0]" /><i className="h-px w-2 bg-[#4468a0]" />
            </span>
          </div>
          <button aria-label="아래로" className="flex h-[19px] shrink-0 items-center justify-center border border-[#6f96c6] bg-[#b9d3f1]"><Svg w={7} h={5}><path d="M3.500 5L7 0H0z" fill="#25457d" /></Svg></button>
          <button aria-label="쪽 이동" className="mt-px mb-[37px] flex h-5 shrink-0 items-center justify-center border border-[#6f96c6] bg-[#b9d3f1]"><Svg w={11} h={12}><path d="M.5.500h10v11H.500zM3 3.500h5v5H3z" stroke="#2c528f" /></Svg></button>
        </div>
      </div>
      <ImeBar />
    </section>
  );
}

/* ---------- taskbar ---------- */

function Task({ label, children, open = false, active = false, w = "w-[62px]" }: { label: string; children: ReactNode; open?: boolean; active?: boolean; w?: string }) {
  return (
    <button aria-label={label} className={`relative flex h-full shrink-0 items-center justify-center ${w} ${active ? "bg-[#4d4a48]" : ""}`}>
      {children}
      {open && <span className={`absolute bottom-0 h-[3px] bg-[#76b5e6] ${active ? "inset-x-0" : "inset-x-[5px]"}`} />}
    </button>
  );
}

const Office = ({ c, d, letter }: { c: string; d: string; letter: string }) => (
  <span className="relative flex">
    <Svg w={27} h={27}>
      <path d="M14 4h12v19H14z" fill="#fff" stroke={c} />
      <path d="M16 7.500h8M16 10.500h8M16 13.500h8M16 16.500h8M16 19.500h8" stroke={c} strokeWidth="1.500" />
      <path d="M0 4l16-4v27L0 23z" fill={d} />
    </Svg>
    <span className="absolute top-[4px] left-[2px] w-3 text-center font-['Open_Sans',sans-serif] text-[13px] leading-[19px] font-bold text-white">{letter}</span>
  </span>
);

function Taskbar() {
  return (
    <footer className={`flex h-[50px] shrink-0 bg-linear-to-r from-[#14110f] via-[#24211f] to-[#2a2f36] text-white ${UI}`}>
      <Task label="시작" w="w-[60px]"><Svg w={20}><path d="M0 3l8-1v7.500H0zM9 1.800L20 0v9.500H9zM0 10.500h8V18l-8-1zM9 10.500h11V20L9 18.200z" fill="#fff" /></Svg></Task>
      <Task label="검색" w="w-[60px]"><Svg w={20}><circle cx="13" cy="7" r="6" stroke="#fff" strokeWidth="1.500" /><path d="M8.500 11.500L1 19" stroke="#fff" strokeWidth="1.500" /></Svg></Task>
      <Task label="작업 보기" w="w-[60px]"><Svg w={20}><path d="M.7 0v3.500h12V0M.7 20v-3.500h12V20M.7 6h12v8H.7zM18.500 0v5M18.500 10v10" stroke="#fff" strokeWidth="1.300" /><path d="M17 6.500h3V9h-3z" fill="#fff" /></Svg></Task>
      <span className="w-[3px]" />
      <Task label="Internet Explorer">
        <Svg w={30}>
          <path d="M22 20a8.500 8.500 0 1 1 2-6H9" stroke="#5cc8f5" strokeWidth="5" />
          <path d="M4 27C-2 26 5 12 14 6s15-6 14 0" stroke="#f3c62c" strokeWidth="2" />
        </Svg>
      </Task>
      <Task label="Edge">
        <Svg w={26}><path d="M1 12C2 4 7 0 13 0c8 0 12 6 12 12v3H9c0 6 8 7 14 4v5c-7 4-19 2-19-8 0-4 2-6 5-8-3 0-6 1-8 4zM9 10h9c0-5-8-5-9 0z" fill="#0b78d7" /></Svg>
      </Task>
      <Task label="스토어">
        <Svg w={30}><path d="M10 8V4c0-4 9-4 9 0v4" stroke="#ccc" strokeWidth="2" /><path d="M1 7h28v22H1z" fill="#fff" /><path d="M9 12h6v6H9z" fill="#f25022" /><path d="M16 12h6v6h-6z" fill="#7fba00" /><path d="M9 19h6v6H9z" fill="#00a4ef" /><path d="M16 19h6v6h-6z" fill="#ffb900" /></Svg>
      </Task>
      <Task label="파일 탐색기">
        <Svg w={28} h={24}><path d="M0 1h11l2 3h15v19H0z" fill="#fbe38e" /><path d="M1 1h9v2H1z" fill="#e6a83a" /><path d="M5 23V13h18v10h-4v-5h-10v5z" fill="#3fa9dc" /></Svg>
      </Task>
      <Task label="메일"><Svg w={30} h={24}><path d="M15 0l15 9v15H0V9z" fill="#fff" /><path d="M1 9h28L17 15l7 5-12-5z" fill="#1a1613" /></Svg></Task>
      <Task label="Opera"><Svg w={30}><path fillRule="evenodd" d="M15 1a14 14 0 1 0 .01 0zM15 5c4 0 6 5 6 10s-2 10-6 10-6-5-6-10 2-10 6-10z" fill="#e8202c" /><path d="M17 1.200c16 2 16 25 0 27.600 9-5 9-22 0-27.600z" fill="#f2544c" /></Svg></Task>
      <Task label="SPSS" open>
        <Svg w={30}><circle cx="15" cy="15" r="15" fill="#4f8dcb" /><path d="M16 10V8H7l5 6.500L7 21h9v-2" stroke="#fff" strokeWidth="1.500" /><path d="M24 10c-2 8-6 5-5 2s4-1 5 3M21 19v5M18.500 21.500h5" stroke="#dbe9f7" strokeWidth="1.200" /></Svg>
      </Task>
      <Task label="메모장" open><Svg w={30}><path d="M24 5l3 18-3 4" stroke="#a88c62" strokeWidth="1.500" /><path d="M10 4l14-1-1 23-21-5z" fill="#dfeef1" /><path d="M10 6l13-1-2 18-17-4z" fill="#55adc4" /><path d="M10 3l14-1v4L9 8z" fill="#d8eaee" /></Svg></Task>
      <Task label="카카오톡" open>
        <span className="relative flex size-[30px] items-center justify-center bg-[#fae100]">
          <Svg w={24} h={22}><ellipse cx="12" cy="10" rx="12" ry="9" fill="#3b1e1e" /><path d="M7 17l1 5 5-4z" fill="#3b1e1e" /></Svg>
          <span className="absolute inset-x-0 top-[9px] text-center font-['Open_Sans',sans-serif] text-[7px] leading-[9px] font-bold text-[#fae100]">TALK</span>
        </span>
      </Task>
      <Task label="Word" open><Office c="#2b579a" d="#2b579a" letter="W" /></Task>
      <Task label="Excel" open><Office c="#217346" d="#1e7145" letter="X" /></Task>
      <Task label="한글" open active><HanLogo size={28} /></Task>
      <div className="ml-auto flex items-center">
        <button aria-label="피플" className="mr-[27px]">
          <Svg w={20} h={20}><circle cx="13" cy="4.500" r="3" stroke="#fff" strokeWidth="1.500" /><path d="M10 13c0-7 8-6 9-1" stroke="#fff" strokeWidth="1.500" /><circle cx="6" cy="10" r="3" stroke="#fff" strokeWidth="1.500" /><path d="M1 19c1-7 9-7 10 0" stroke="#fff" strokeWidth="1.500" /></Svg>
        </button>
        <button aria-label="숨겨진 아이콘 표시" className="mr-[12px]"><Svg w={17} h={10}><path d="M1 9l7.500-7.500L16 9" stroke="#fff" strokeWidth="1.500" /></Svg></button>
        <button aria-label="백신 꺼짐" className="mr-[12px]"><Svg w={18} h={18}><circle cx="9" cy="9" r="9" fill="#8f9193" /><path d="M5.500 5.500l7 7M12.500 5.500l-7 7" stroke="#111" strokeWidth="2" /></Svg></button>
        <div className="w-[78px] text-center text-[15px] leading-[23px] whitespace-nowrap">오후 3:24<br />2019-03-29</div>
        <button aria-label="알림 센터" className="relative mr-[25px] ml-[22px]">
          <Svg w={20} h={20}><path d="M0 0h20v15h-9l-4 4v-4H0z" fill="#fff" /><path d="M4 4.500h12M4 8h12M4 11.500h8" stroke="#2a2f36" strokeWidth="1.500" /></Svg>
          <span className="absolute top-[9px] left-[10px] size-[20px] rounded-full border border-[#8a8f95] bg-[#2a2f36] text-[14px] leading-[18px] font-bold">2</span>
        </button>
        <span className="mr-[5px] h-[50px] w-px bg-[#6a6e73]" />
      </div>
    </footer>
  );
}

export default function App() {
  return (
    <div className="flex h-screen w-full flex-col overflow-hidden">
      <div className="relative min-h-0 flex-1 overflow-hidden">
        <Excel />
        <Hangul />
      </div>
      <Taskbar />
    </div>
  );
}
